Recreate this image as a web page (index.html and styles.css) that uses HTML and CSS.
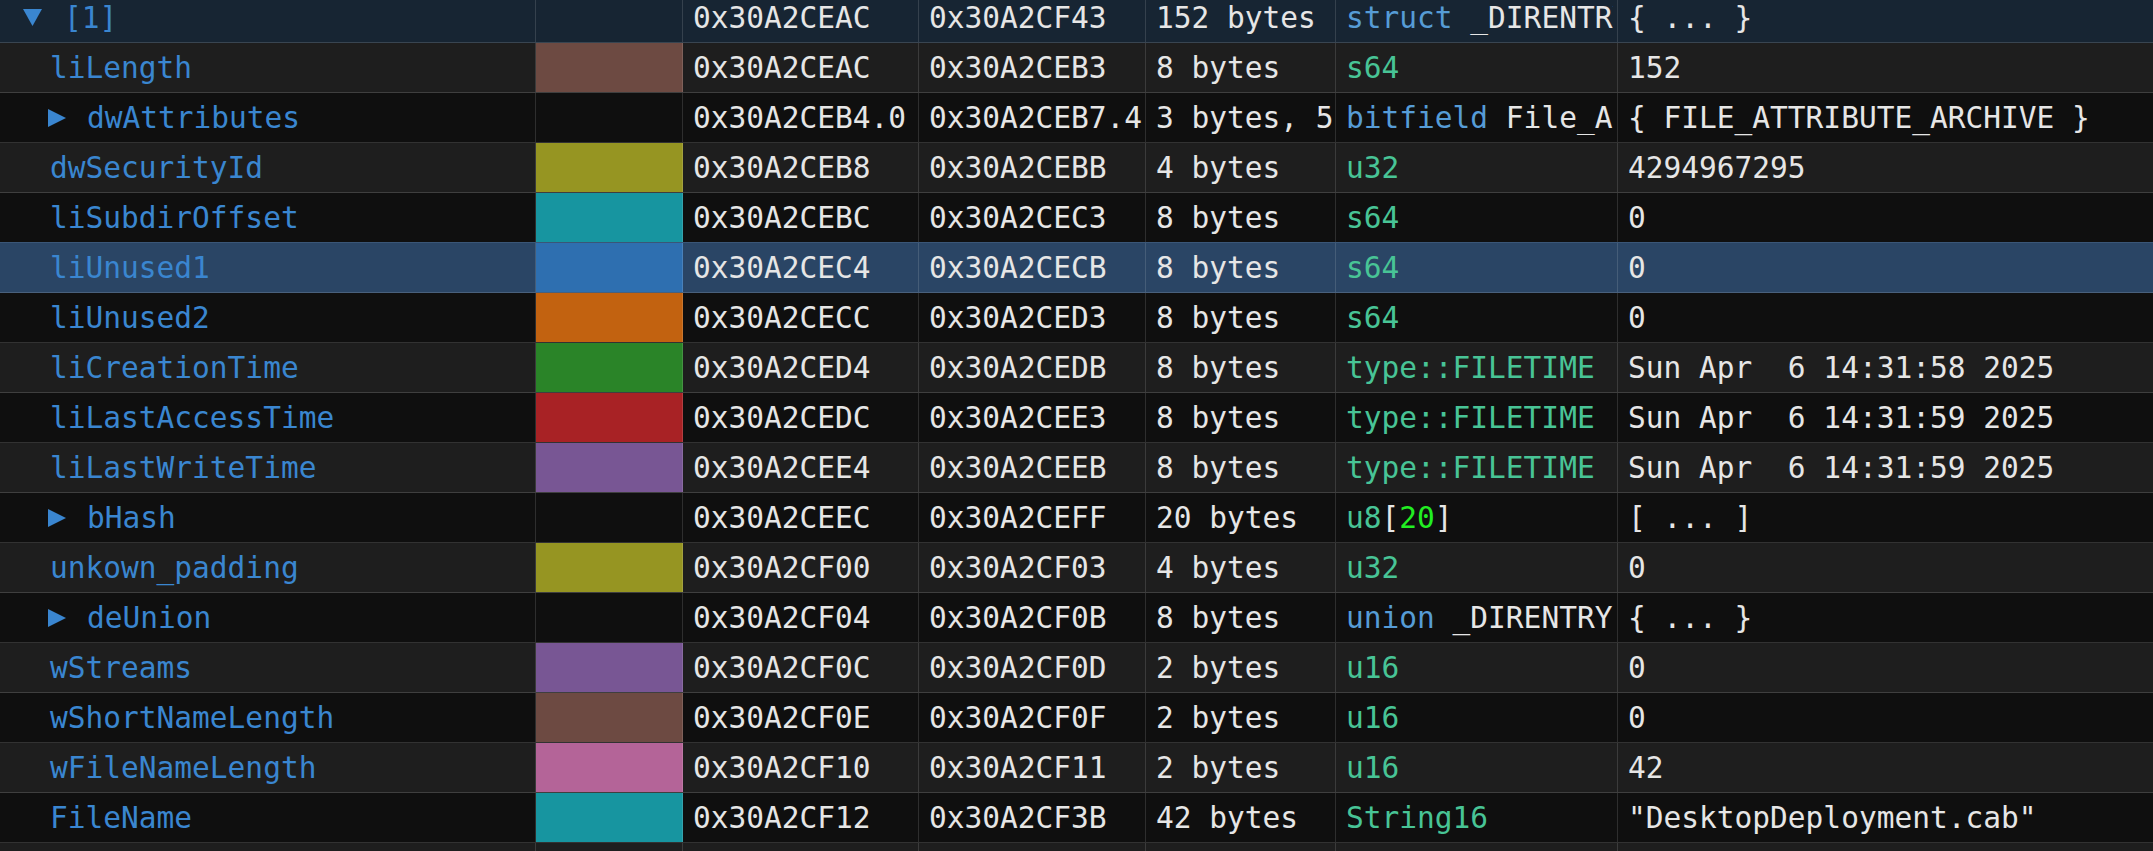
FILE: index.html
```html
<!DOCTYPE html>
<html>
<head>
<meta charset="utf-8">
<link rel="stylesheet" href="styles.css">
</head>
<body>
<div class="table">
  <div class="row parent">
    <div class="cell name lvl0"><svg class="tri down" width="19" height="17" viewBox="0 0 19 17"><polygon points="0,0 19,0 9.5,17"/></svg><span>[1]</span></div>
    <div class="cell swatch"></div>
    <div class="cell">0x30A2CEAC</div>
    <div class="cell">0x30A2CF43</div>
    <div class="cell">152 bytes</div>
    <div class="cell tight"><span class="txt"><span class="kw">struct</span> _DIRENTRY</span></div>
    <div class="cell">{ ... }</div>
  </div>
  <div class="row odd">
    <div class="cell name lvl1 leaf"><span>liLength</span></div>
    <div class="cell swatch c-brown"></div>
    <div class="cell">0x30A2CEAC</div>
    <div class="cell">0x30A2CEB3</div>
    <div class="cell">8 bytes</div>
    <div class="cell ty">s64</div>
    <div class="cell">152</div>
  </div>
  <div class="row even">
    <div class="cell name lvl1"><svg class="tri" width="18" height="18" viewBox="0 0 18 18"><polygon points="0,0 18,9 0,18"/></svg><span>dwAttributes</span></div>
    <div class="cell swatch"></div>
    <div class="cell">0x30A2CEB4.0</div>
    <div class="cell">0x30A2CEB7.4</div>
    <div class="cell">3 bytes, 5 bits</div>
    <div class="cell tight"><span class="txt"><span class="kw">bitfield</span> File_Attributes</span></div>
    <div class="cell">{ FILE_ATTRIBUTE_ARCHIVE }</div>
  </div>
  <div class="row odd">
    <div class="cell name lvl1 leaf"><span>dwSecurityId</span></div>
    <div class="cell swatch c-olive"></div>
    <div class="cell">0x30A2CEB8</div>
    <div class="cell">0x30A2CEBB</div>
    <div class="cell">4 bytes</div>
    <div class="cell ty">u32</div>
    <div class="cell">4294967295</div>
  </div>
  <div class="row even">
    <div class="cell name lvl1 leaf"><span>liSubdirOffset</span></div>
    <div class="cell swatch c-teal"></div>
    <div class="cell">0x30A2CEBC</div>
    <div class="cell">0x30A2CEC3</div>
    <div class="cell">8 bytes</div>
    <div class="cell ty">s64</div>
    <div class="cell">0</div>
  </div>
  <div class="row selected">
    <div class="cell name lvl1 leaf"><span>liUnused1</span></div>
    <div class="cell swatch c-blue"></div>
    <div class="cell">0x30A2CEC4</div>
    <div class="cell">0x30A2CECB</div>
    <div class="cell">8 bytes</div>
    <div class="cell ty">s64</div>
    <div class="cell">0</div>
  </div>
  <div class="row even">
    <div class="cell name lvl1 leaf"><span>liUnused2</span></div>
    <div class="cell swatch c-orange"></div>
    <div class="cell">0x30A2CECC</div>
    <div class="cell">0x30A2CED3</div>
    <div class="cell">8 bytes</div>
    <div class="cell ty">s64</div>
    <div class="cell">0</div>
  </div>
  <div class="row odd">
    <div class="cell name lvl1 leaf"><span>liCreationTime</span></div>
    <div class="cell swatch c-green"></div>
    <div class="cell">0x30A2CED4</div>
    <div class="cell">0x30A2CEDB</div>
    <div class="cell">8 bytes</div>
    <div class="cell ty">type::FILETIME</div>
    <div class="cell">Sun Apr  6 14:31:58 2025</div>
  </div>
  <div class="row even">
    <div class="cell name lvl1 leaf"><span>liLastAccessTime</span></div>
    <div class="cell swatch c-red"></div>
    <div class="cell">0x30A2CEDC</div>
    <div class="cell">0x30A2CEE3</div>
    <div class="cell">8 bytes</div>
    <div class="cell ty">type::FILETIME</div>
    <div class="cell">Sun Apr  6 14:31:59 2025</div>
  </div>
  <div class="row odd">
    <div class="cell name lvl1 leaf"><span>liLastWriteTime</span></div>
    <div class="cell swatch c-purple"></div>
    <div class="cell">0x30A2CEE4</div>
    <div class="cell">0x30A2CEEB</div>
    <div class="cell">8 bytes</div>
    <div class="cell ty">type::FILETIME</div>
    <div class="cell">Sun Apr  6 14:31:59 2025</div>
  </div>
  <div class="row even">
    <div class="cell name lvl1"><svg class="tri" width="18" height="18" viewBox="0 0 18 18"><polygon points="0,0 18,9 0,18"/></svg><span>bHash</span></div>
    <div class="cell swatch"></div>
    <div class="cell">0x30A2CEEC</div>
    <div class="cell">0x30A2CEFF</div>
    <div class="cell">20 bytes</div>
    <div class="cell"><span class="tyc">u8</span>[<span class="num">20</span>]</div>
    <div class="cell">[ ... ]</div>
  </div>
  <div class="row odd">
    <div class="cell name lvl1 leaf"><span>unkown_padding</span></div>
    <div class="cell swatch c-olive"></div>
    <div class="cell">0x30A2CF00</div>
    <div class="cell">0x30A2CF03</div>
    <div class="cell">4 bytes</div>
    <div class="cell ty">u32</div>
    <div class="cell">0</div>
  </div>
  <div class="row even">
    <div class="cell name lvl1"><svg class="tri" width="18" height="18" viewBox="0 0 18 18"><polygon points="0,0 18,9 0,18"/></svg><span>deUnion</span></div>
    <div class="cell swatch"></div>
    <div class="cell">0x30A2CF04</div>
    <div class="cell">0x30A2CF0B</div>
    <div class="cell">8 bytes</div>
    <div class="cell"><span class="kw">union</span> _DIRENTRY</div>
    <div class="cell">{ ... }</div>
  </div>
  <div class="row odd">
    <div class="cell name lvl1 leaf"><span>wStreams</span></div>
    <div class="cell swatch c-purple"></div>
    <div class="cell">0x30A2CF0C</div>
    <div class="cell">0x30A2CF0D</div>
    <div class="cell">2 bytes</div>
    <div class="cell ty">u16</div>
    <div class="cell">0</div>
  </div>
  <div class="row even">
    <div class="cell name lvl1 leaf"><span>wShortNameLength</span></div>
    <div class="cell swatch c-brown"></div>
    <div class="cell">0x30A2CF0E</div>
    <div class="cell">0x30A2CF0F</div>
    <div class="cell">2 bytes</div>
    <div class="cell ty">u16</div>
    <div class="cell">0</div>
  </div>
  <div class="row odd">
    <div class="cell name lvl1 leaf"><span>wFileNameLength</span></div>
    <div class="cell swatch c-pink"></div>
    <div class="cell">0x30A2CF10</div>
    <div class="cell">0x30A2CF11</div>
    <div class="cell">2 bytes</div>
    <div class="cell ty">u16</div>
    <div class="cell">42</div>
  </div>
  <div class="row even">
    <div class="cell name lvl1 leaf"><span>FileName</span></div>
    <div class="cell swatch c-teal"></div>
    <div class="cell">0x30A2CF12</div>
    <div class="cell">0x30A2CF3B</div>
    <div class="cell">42 bytes</div>
    <div class="cell ty">String16</div>
    <div class="cell">"DesktopDeployment.cab"</div>
  </div>
  <div class="row odd">
    <div class="cell name lvl1 leaf"></div>
    <div class="cell swatch"></div>
    <div class="cell"></div>
    <div class="cell"></div>
    <div class="cell"></div>
    <div class="cell"></div>
    <div class="cell"></div>
  </div>
</div>
</body>
</html>
```
FILE: styles.css
```css
html, body {
  margin: 0;
  padding: 0;
  background: #0f0f0f;
  overflow: hidden;
}
body {
  width: 2153px;
  height: 851px;
}
.table {
  margin-top: -7px;
  font-family: "DejaVu Sans Mono", "Liberation Mono", monospace;
  font-size: 29.5px;
  color: #e6e6e6;
}
.row {
  display: grid;
  grid-template-columns: 536px 147px 236px 227px 190px 282px 1fr;
  height: 50px;
  box-sizing: border-box;
  border-bottom: 1px solid rgba(255,255,255,0.15);
}
.row.odd { background: #1e1e1e; }
.row.even { background: #0f0f0f; }
.row.parent { background: #172533; }
.row.selected {
  background: #2a4565;
  box-shadow: 0 -1px 0 #3a5677;
}
.cell {
  box-sizing: border-box;
  border-right: 1px solid rgba(255,255,255,0.13);
  padding-left: 10px;
  display: flex;
  align-items: center;
  white-space: pre;
  overflow: hidden;
  min-width: 0;
}
.cell:last-child { border-right: none; }
.cell.tight { padding-right: 4px; }
.txt { overflow: hidden; min-width: 0; white-space: pre; }
.name { color: #3a86d0; }
.name.lvl0 { padding-left: 23px; }
.name.lvl1 { padding-left: 48px; }
.name.leaf { padding-left: 50px; }
.tri { fill: #3a86d0; flex: none; }
.tri.down { margin-right: 22px; margin-top: -1px; }
.name.lvl1 .tri { margin-right: 21px; }
.swatch { padding: 0; }
.c-brown { background: #6d4a42; }
.c-olive { background: #969522; }
.c-teal { background: #1795a0; }
.c-blue { background: #2e6fb0; }
.c-orange { background: #c26210; }
.c-green { background: #2a8428; }
.c-red { background: #a82225; }
.c-purple { background: #785694; }
.c-pink { background: #b46498; }
.ty, .tyc { color: #48c496; }
.kw { color: #569cd6; }
.num { color: #22ee22; }
```
